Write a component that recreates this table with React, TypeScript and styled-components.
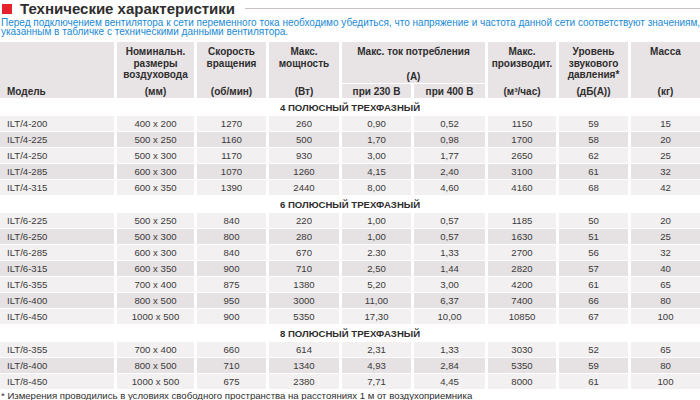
import React from 'react';
import styled, { createGlobalStyle } from 'styled-components';

const GlobalStyle = createGlobalStyle`
  html, body {
    margin: 0;
    padding: 0;
    background: #ffffff;
  }
  body {
    font-family: "Liberation Sans", Arial, sans-serif;
    color: #333;
  }
`;

const Page = styled.div`
  width: 700px;
  height: 400px;
  overflow: hidden;
`;

const TitleBar = styled.div`
  display: flex;
  align-items: center;
  gap: 8px;
  height: 17px;
  padding-left: 2px;
`;

const RedMark = styled.span`
  width: 10px;
  height: 10px;
  background: #e5232b;
  flex: none;
`;

const Title = styled.h1`
  margin: 0;
  font-size: 15px;
  line-height: 17px;
  font-weight: 700;
  color: #2e2e2e;
  white-space: nowrap;
`;

const TitleRule = styled.span`
  flex: 1;
  height: 1px;
  background: #c9c0c4;
  margin-left: 2px;
`;

const Intro = styled.p`
  margin: 1px 0 0;
  padding-left: 1px;
  font-size: 10px;
  line-height: 9px;
  white-space: nowrap;
  color: #1a8ad6;
`;

const Grid = styled.div`
  display: grid;
  grid-template-columns: 114px 77px 69px 70px 69px 71px 68px 69px 69px;
  grid-template-rows: 41px 14px;
  column-gap: 3px;
  row-gap: 1px;
  margin-top: 6px;
`;

const HeadCell = styled.div<{ $rows?: number; $cols?: number; $align?: 'left' | 'center'; $bottomOnly?: boolean }>`
  grid-row: span ${(p) => p.$rows ?? 1};
  grid-column: span ${(p) => p.$cols ?? 1};
  background: #e8e3e5;
  display: flex;
  flex-direction: column;
  justify-content: ${(p) => (p.$bottomOnly ? 'flex-end' : 'space-between')};
  align-items: ${(p) => (p.$align === 'left' ? 'flex-start' : 'center')};
  padding: 4px ${(p) => (p.$align === 'left' ? '0 1px 7px' : '2px 1px')};
  font-size: 10px;
  line-height: 11.5px;
  font-weight: 700;
  color: #2e2e2e;
  text-align: center;
`;

const SubHead = styled.div`
  background: #e8e3e5;
  display: flex;
  align-items: center;
  justify-content: center;
  font-size: 10px;
  font-weight: 700;
  color: #2e2e2e;
`;

const Section = styled.div`
  grid-column: 1 / -1;
  height: 16px;
  display: flex;
  align-items: center;
  justify-content: center;
  font-size: 9.6px;
  font-weight: 700;
  color: #2e2e2e;
  text-transform: uppercase;
`;

const Cell = styled.div<{ $dark: boolean; $left?: boolean }>`
  height: 15px;
  display: flex;
  align-items: center;
  justify-content: ${(p) => (p.$left ? 'flex-start' : 'center')};
  padding-left: ${(p) => (p.$left ? '7px' : '0')};
  background: ${(p) => (p.$dark ? '#e6e1e3' : '#f3f0f1')};
  font-size: 9.6px;
  color: #3a3a3a;
`;

const Footnote = styled.p`
  margin: 1px 0 0;
  padding-left: 1px;
  font-size: 9.6px;
  line-height: 11px;
  color: #2e2e2e;
`;

type Row = [string, string, string, string, string, string, string, string, string];

const groups: { title: string; rows: Row[] }[] = [
  {
    title: '4 полюсный трехфазный',
    rows: [
      ['ILT/4-200', '400 x 200', '1270', '260', '0,90', '0,52', '1150', '59', '15'],
      ['ILT/4-225', '500 x 250', '1160', '500', '1,70', '0,98', '1700', '58', '20'],
      ['ILT/4-250', '500 x 300', '1170', '930', '3,00', '1,77', '2650', '62', '25'],
      ['ILT/4-285', '600 x 300', '1070', '1260', '4,15', '2,40', '3100', '61', '32'],
      ['ILT/4-315', '600 x 350', '1390', '2440', '8,00', '4,60', '4160', '68', '42'],
    ],
  },
  {
    title: '6 полюсный трехфазный',
    rows: [
      ['ILT/6-225', '500 x 250', '840', '220', '1,00', '0,57', '1185', '50', '20'],
      ['ILT/6-250', '500 x 300', '800', '280', '1,00', '0,57', '1630', '51', '25'],
      ['ILT/6-285', '600 x 300', '840', '670', '2.30', '1,33', '2700', '56', '32'],
      ['ILT/6-315', '600 x 350', '900', '710', '2,50', '1,44', '2820', '57', '40'],
      ['ILT/6-355', '700 x 400', '875', '1380', '5,20', '3,00', '4200', '61', '65'],
      ['ILT/6-400', '800 x 500', '950', '3000', '11,00', '6,37', '7400', '66', '80'],
      ['ILT/6-450', '1000 x 500', '900', '5350', '17,30', '10,00', '10850', '67', '100'],
    ],
  },
  {
    title: '8 полюсный трехфазный',
    rows: [
      ['ILT/8-355', '700 x 400', '660', '614', '2,31', '1,33', '3030', '52', '65'],
      ['ILT/8-400', '800 x 500', '710', '1340', '4,93', '2,84', '5350', '59', '80'],
      ['ILT/8-450', '1000 x 500', '675', '2380', '7,71', '4,45', '8000', '61', '100'],
    ],
  },
];

function Head({ lines, unit }: { lines: string[]; unit: string }) {
  return (
    <HeadCell $rows={2}>
      <div>
        {lines.map((l) => (
          <div key={l}>{l}</div>
        ))}
      </div>
      <div>{unit}</div>
    </HeadCell>
  );
}

export default function App() {
  return (
    <Page>
      <GlobalStyle />
      <TitleBar>
        <RedMark />
        <Title>Технические характеристики</Title>
        <TitleRule />
      </TitleBar>
      <Intro>
        Перед подключением вентилятора к сети переменного тока необходимо убедиться, что напряжение и частота данной сети соответствуют значениям,
        <br />
        указанным в табличке с техническими данными вентилятора.
      </Intro>
      <Grid>
        <HeadCell $rows={2} $align="left" $bottomOnly>
          <div>Модель</div>
        </HeadCell>
        <Head lines={['Номинальн.', 'размеры', 'воздуховода']} unit="(мм)" />
        <Head lines={['Скорость', 'вращения']} unit="(об/мин)" />
        <Head lines={['Макс.', 'мощность']} unit="(Вт)" />
        <HeadCell $cols={2}>
          <div>Макс. ток потребления</div>
          <div>(А)</div>
        </HeadCell>
        <Head lines={['Макс.', 'производит.']} unit="(м³/час)" />
        <Head lines={['Уровень', 'звукового', 'давления*']} unit="(дБ(А))" />
        <Head lines={['Масса']} unit="(кг)" />
        <SubHead>при 230 В</SubHead>
        <SubHead>при 400 В</SubHead>
        {groups.map((g) => (
          <React.Fragment key={g.title}>
            <Section>{g.title}</Section>
            {g.rows.map((row, ri) =>
              row.map((v, ci) => (
                <Cell key={`${row[0]}-${ci}`} $dark={ri % 2 === 1} $left={ci === 0}>
                  {v}
                </Cell>
              ))
            )}
          </React.Fragment>
        ))}
      </Grid>
      <Footnote>* Измерения проводились в условиях свободного пространства на расстояниях 1 м от воздухоприемника</Footnote>
    </Page>
  );
}
